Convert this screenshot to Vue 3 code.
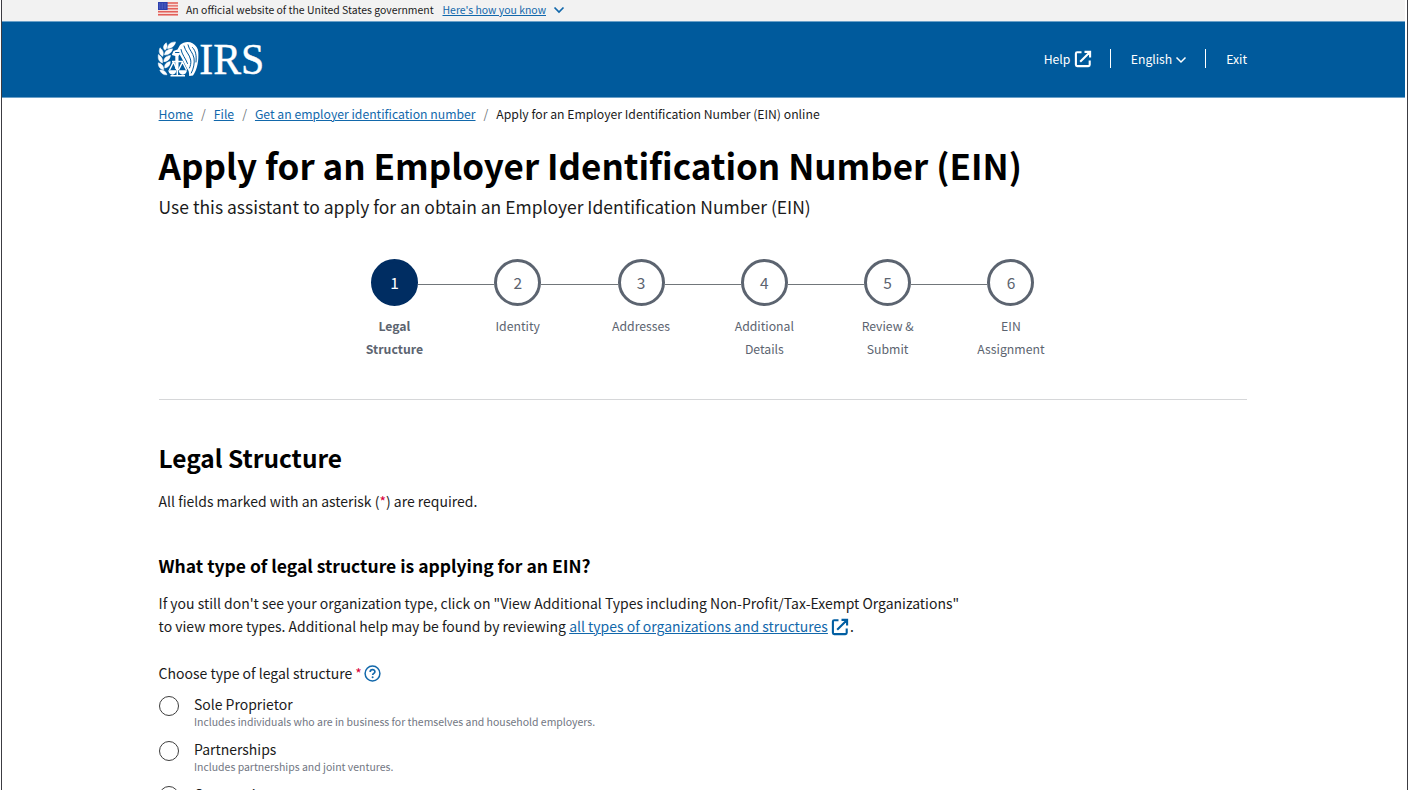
<script setup>
const steps = [
  ['Legal', 'Structure'],
  ['Identity'],
  ['Addresses'],
  ['Additional', 'Details'],
  ['Review &', 'Submit'],
  ['EIN', 'Assignment'],
]
const options = [
  { title: 'Sole Proprietor', note: 'Includes individuals who are in business for themselves and household employers.' },
  { title: 'Partnerships', note: 'Includes partnerships and joint ventures.' },
  { title: 'Corporations' },
]
</script>

<template>
  <div class="page">
    <div class="banner">
      <svg class="flag" width="20" height="14" viewBox="0 0 20 14">
        <rect width="20" height="14" fill="#f7dcd8" />
        <path d="M0 1h20M0 3.9h20M0 6.8h20M0 9.7h20M0 12.8h20" stroke="#e2605a" stroke-width="1.4" />
        <rect width="9.6" height="8" fill="#2b3fae" />
        <path d="M1 2h8M1 4h8M1 6h8" stroke="#8f9bdc" stroke-width=".7" stroke-dasharray=".8 .8" />
      </svg>
      <span class="official">An official website of the United States government</span>
      <a class="know">Here's how you know</a>
      <svg class="know-arrow" width="12" height="8" viewBox="0 0 12 8"><path d="M1.500 1.500 6 6l4.500-4.500" fill="none" stroke="#1268ab" stroke-width="1.7" /></svg>
    </div>

    <header class="header">
      <svg class="logo" width="106" height="38" viewBox="0 0 106 38">
        <!-- wheat leaves -->
        <g fill="#fff" stroke="#fff" stroke-width=".5">
          <path d="M9.500 7.500C9.500 3.500 12.500 1 17.500.9 17 4.800 13.500 7.300 9.500 7.500Z" />
          <path d="M7 9.300C4.400 6.800 5.400 4 8.300 1.800 9.700 4.800 9.200 7.500 7 9.300Z" />
          <path d="M6.500 14C6.800 10 9.500 8.300 14.500 7.800 13.800 11.800 10.500 14 6.500 14Z" />
          <path d="M4.800 15.400C1.200 13.500.5 10.500 2 6.800 5.200 9.200 6 12 4.800 15.400Z" />
          <path d="M5.800 20.700C5.800 16.700 8.300 14.900 12.500 14.400 12 18.300 9.500 20.500 5.800 20.700Z" />
          <path d="M4.500 22C.8 20.700-.3 17.700.4 13.500 3.800 15.700 5 18.300 4.500 22Z" />
          <path d="M6.800 27C6.200 23.300 8.300 21.300 12.300 20.500 12.300 23.900 10.500 26.500 6.800 27Z" />
          <path d="M5.800 28.800C2 28.200.1 25.700.3 21.800 3.900 22.700 5.900 25 5.800 28.800Z" />
          <path d="M9 33.800C5.500 34.200 3 32.300 1.800 29 5.500 28.800 8.200 30.500 9 33.800Z" />
        </g>
        <!-- eagle -->
        <path fill="#fff" d="M22 4C25.500.6 31 .2 34.500 2.200 38 4.300 40 7 40.300 11 40.800 19 39.700 28 35 34.500L31.200 35C31.200 31 30.500 29 29 27.500L25 19.500 21.700 13.500 20.500 15V28H17.300V15L13.800 14 15.500 10 19.500 8.500Z" />
        <g fill="none" stroke="#005a9c" stroke-width="1" stroke-linecap="round">
          <path d="M23 8.500C24 14 27.500 17 29.500 22.500M26 5C27.500 11 31.500 13 32.700 19 33.200 22 32.500 25 31.500 27M30 3.800C31 9 35 11.500 36 17 36.800 22 35.500 28 33.300 32" />
          <path d="M34.500 6.500C38 10 38.600 15 38 21M17.500 11.500H21" />
        </g>
        <!-- scales -->
        <g fill="none" stroke="#fff" stroke-width="1.500" stroke-linejoin="round">
          <path d="M14 20.500H25M11.500 29 15.500 21 19 29M20.500 29 24.500 21 28.500 29M19.300 28V34" />
        </g>
        <path fill="#fff" d="M10.200 29.300H18.500C18.200 32 16.500 33.700 14.500 33.700S10.500 32 10.200 29.300ZM20.500 29.300H29C28.600 32 27 33.700 24.800 33.700S20.800 32 20.500 29.300ZM12.500 34H27V35.500H12.500Z" />
        <text class="wordmark" x="41.300" y="33" textLength="65" lengthAdjust="spacingAndGlyphs">IRS</text>
      </svg>
      <nav class="tools">
        <a class="help">Help</a>
        <svg class="ext" width="18" height="18" viewBox="0 0 18 18"><path d="M7.500 2.300H3.200a1.300 1.300 0 0 0-1.300 1.300v11.200a1.300 1.300 0 0 0 1.300 1.300h11.200a1.300 1.300 0 0 0 1.300-1.300v-4.300M6.200 11.800 15 3M10.500 1.900h5.600v5.600" fill="none" stroke="#fff" stroke-width="2.100" /></svg>
        <i class="bar"></i>
        <a class="lang">English</a>
        <svg class="lang-arrow" width="12" height="8" viewBox="0 0 12 8"><path d="M1.500 1.500 6 6l4.500-4.500" fill="none" stroke="#fff" stroke-width="1.500" /></svg>
        <i class="bar second"></i>
        <a class="exit">Exit</a>
      </nav>
    </header>

    <main class="main">
      <nav class="crumbs">
        <a>Home</a><i>/</i><a>File</a><i>/</i><a>Get an employer identification number</a><i>/</i><span>Apply for an Employer Identification Number (EIN) online</span>
      </nav>
      <h1>Apply for an Employer Identification Number (EIN)</h1>
      <p class="subtitle">Use this assistant to apply for an obtain an Employer Identification Number (EIN)</p>

      <ol class="stepper">
        <li v-for="(step, i) in steps" :key="i" :class="{ active: i === 0 }">
          <div class="track"><span class="line" :class="{ none: i === 0 }"></span><b class="dot">{{ i + 1 }}</b><span class="line" :class="{ none: i === 5 }"></span></div>
          <div class="label"><div v-for="word in step" :key="word">{{ word }}</div></div>
        </li>
      </ol>

      <h2>Legal Structure</h2>
      <p class="required">All fields marked with an asterisk (<em>*</em>) are required.</p>
      <h3>What type of legal structure is applying for an EIN?</h3>
      <div class="intro">
        <div>If you still don't see your organization type, click on "View Additional Types including Non-Profit/Tax-Exempt Organizations"</div>
        <div>to view more types. Additional help may be found by reviewing <a>all types of organizations and structures</a><svg class="inline" width="18" height="18" viewBox="0 0 18 18"><path d="M7.500 2.300H3.200a1.300 1.300 0 0 0-1.300 1.300v11.200a1.300 1.300 0 0 0 1.300 1.300h11.200a1.300 1.300 0 0 0 1.300-1.300v-4.300M6.200 11.800 15 3M10.500 1.900h5.600v5.600" fill="none" stroke="#005ea2" stroke-width="2.100" /></svg>.</div>
      </div>
      <div class="choose">
        <span>Choose type of legal structure <em>*</em></span>
        <svg width="17" height="17" viewBox="0 0 17 17"><circle cx="8.500" cy="8.500" r="7.400" fill="none" stroke="#1268ab" stroke-width="1.500" /><path d="M6.200 6.900c0-3 4.700-2.900 4.700-.2 0 1.700-2.200 1.600-2.200 3.300" fill="none" stroke="#1268ab" stroke-width="1.700" /><circle cx="8.600" cy="12.200" r="1" fill="#1268ab" /></svg>
      </div>
      <div class="options">
        <div v-for="option in options" :key="option.title" class="option">
          <span class="radio"></span>
          <div><div class="title">{{ option.title }}</div><div v-if="option.note" class="note">{{ option.note }}</div></div>
        </div>
      </div>
    </main>
  </div>
</template>

<style>
body { background: #fff; overflow: hidden; }
</style>

<style scoped>
* { box-sizing: border-box; }
.page { width: 1408px; height: 790px; overflow: hidden; padding: 0 2px 0 1px; border-right: 1px solid #3c3c42; border-left: 1px solid #fff; box-shadow: inset 1px 0 #3c3c42; font-family: "Noto Sans CJK SC", "Open Sans", sans-serif; color: #1b1b1b; white-space: nowrap; }
a { color: #1268ab; text-decoration: underline; text-underline-offset: 1px; text-decoration-thickness: 1px; }
em { font-style: normal; color: #d8003b; }
h1, h2, h3, p, ol { margin: 0; padding: 0; }
.banner { height: 22px; padding-left: 156px; display: flex; align-items: flex-start; background: #f2f2f2; border-bottom: 1px solid #6ba0c8; font-size: 10.450px; line-height: 19px; }
.flag { margin-top: 2px; }
.official { margin-left: 8px; width: 249px; }
.know { margin-left: 7.500px; width: 103px; }
.know-arrow { margin: 5.500px 0 0 7px; }
.header { height: 76px; background: #005a9c; border-bottom: 1px solid #6ba0c8; padding: 19px 158px 0 156px; display: flex; justify-content: space-between; }
.logo { overflow: visible; }
.wordmark { font-family: "Liberation Serif", serif; font-size: 45px; fill: #fff; stroke: #fff; stroke-width: .4px; }
.tools { display: flex; align-items: center; height: 38px; font-size: 12.200px; }
.tools a { color: #fff; text-decoration: none; line-height: 20px; margin-top: -2px; }
.tools .ext { margin: -2px 0 0 3.500px; }
.bar { width: 1px; height: 19px; background: #fff; margin: -3px 20px 0 18px; }
.bar.second { margin-left: 18px; }
.lang-arrow { margin: -1px 0 0 3px; }
.main { padding-left: 156.600px; width: 1245px; }
.crumbs { margin-top: 6px; height: 20px; line-height: 20px; font-size: 12.220px; display: flex; }
.crumbs i { font-style: normal; color: #71767a; width: 20.800px; text-align: center; }
h1 { margin-top: 19px; height: 44px; line-height: 44px; font-size: 34.950px; color: #000; }
.subtitle { margin-top: 8px; height: 24px; line-height: 24px; font-size: 17.480px; }
.stepper { list-style: none; display: flex; width: 740px; margin: 40px auto 0; height: 140px; color: #5c6470; }
.stepper li { width: 123.300px; }
.track { display: flex; align-items: center; }
.line { flex: 1; height: 1px; background: #71767a; margin-top: 3px; }
.line.none { visibility: hidden; }
.dot { width: 47px; height: 47px; border: 3px solid #5c6470; border-radius: 50%; display: flex; align-items: center; justify-content: center; font-weight: 400; font-size: 15.500px; line-height: 15px; padding-bottom: 1px; }
.active .dot { background: #002d62; border-color: #002d62; color: #fff; }
.label { margin-top: 9px; text-align: center; font-size: 12.250px; line-height: 23.400px; }
.active .label { font-weight: 700; }
h2 { padding-top: 43px; height: 73px; width: 1088px; border-top: 1px solid #d6d7d9; line-height: 30px; font-size: 24.450px; color: #000; }
.required { margin-top: 17px; height: 24px; line-height: 24px; font-size: 13.980px; }
h3 { margin-top: 40px; height: 26px; line-height: 26px; font-size: 17.510px; color: #000; }
.intro { margin-top: 12.700px; line-height: 23.400px; font-size: 13.980px; }
.inline { margin: 0 1px 0 3px; vertical-align: -4px; display: inline-block; height: 18px; }
.choose { margin-top: 22.700px; height: 24px; line-height: 24px; font-size: 14px; display: flex; align-items: center; gap: 2px; }
.options { padding-top: 8px; }
.option { display: flex; height: 45px; }
.radio { width: 20px; height: 20px; margin: 3px 15.400px 0 0; border: 1.500px solid #3d3d3d; border-radius: 50%; }
.title { font-size: 13.980px; line-height: 22px; }
.note { font-size: 10.480px; line-height: 14px; color: #717682; }
</style>
